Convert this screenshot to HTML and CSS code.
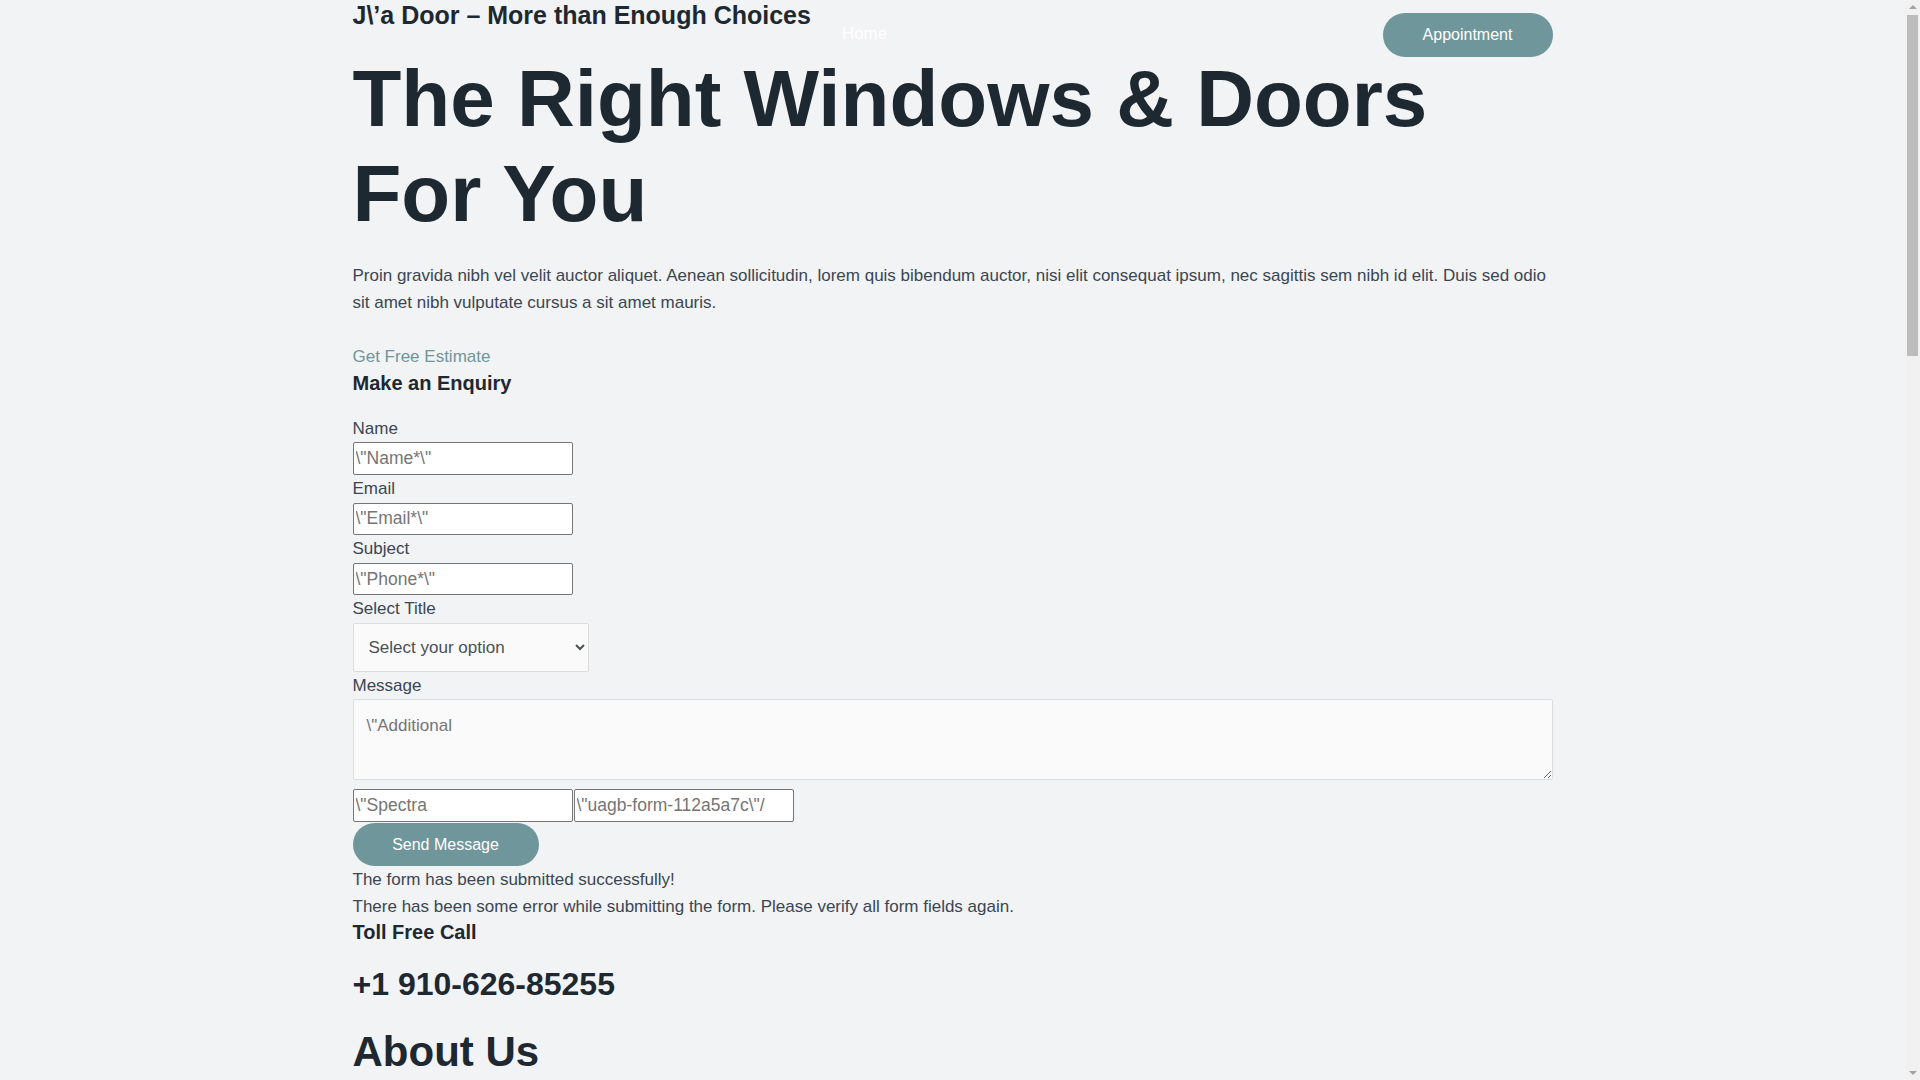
FILE: index.html
```html
<!DOCTYPE html>
<html lang="en">
<head>
<meta charset="utf-8">
<title>J\’a Door – More than Enough Choices</title>
<link rel="stylesheet" href="styles.css">
</head>
<body>
<div class="container">
  <header class="site-header">
    <h1 class="site-title">J\’a Door – More than Enough Choices</h1>
    <nav class="nav"><a href="#">Home</a></nav>
    <a class="btn btn-appointment" href="#">Appointment</a>
  </header>

  <section class="hero">
    <h2 class="hero-title">The Right Windows &amp; Doors For You</h2>
    <p class="hero-text">Proin gravida nibh vel velit auctor aliquet. Aenean sollicitudin, lorem quis bibendum auctor, nisi elit consequat ipsum, nec sagittis sem nibh id elit. Duis sed odio sit amet nibh vulputate cursus a sit amet mauris.</p>
    <a class="estimate" href="#">Get Free Estimate</a>
  </section>

  <section class="enquiry">
    <h3 class="enquiry-title">Make an Enquiry</h3>
    <form class="form">
      <label class="field-label">Name</label>
      <input class="text-input" type="text" placeholder="\&quot;Name*\&quot;">
      <label class="field-label">Email</label>
      <input class="text-input" type="text" placeholder="\&quot;Email*\&quot;">
      <label class="field-label">Subject</label>
      <input class="text-input" type="text" placeholder="\&quot;Phone*\&quot;">
      <label class="field-label">Select Title</label>
      <select class="select"><option>Select your option</option></select>
      <label class="field-label">Message</label>
      <textarea class="textarea" placeholder="\&quot;Additional"></textarea>
      <div class="hidden-row"><input class="text-input row-input" type="text" placeholder="\&quot;Spectra"><input class="text-input row-input" type="text" placeholder="\&quot;uagb-form-112a5a7c\&quot;/"></div>
      <button class="btn btn-send" type="button">Send Message</button>
      <p class="msg">The form has been submitted successfully!</p>
      <p class="msg">There has been some error while submitting the form. Please verify all form fields again.</p>
    </form>
  </section>

  <section class="contact">
    <h4 class="toll">Toll Free Call</h4>
    <h3 class="phone">+1 910-626-85255</h3>
  </section>

  <section class="about">
    <h2 class="about-title">About Us</h2>
  </section>
</div>

<div class="scrollbar" aria-hidden="true">
  <span class="scroll-arrow scroll-up"></span>
  <span class="scroll-thumb"></span>
  <span class="scroll-arrow scroll-down"></span>
</div>
</body>
</html>
```

FILE: styles.css
```css
html, body {
  margin: 0;
  padding: 0;
}

body {
  background: #f2f3f5;
  font-family: "Liberation Sans", Arial, sans-serif;
  font-size: 17px;
  color: #3a4652;
  padding-right: 15px;
  overflow: hidden;
}

.container {
  width: 1200px;
  margin: 0 auto;
}

.site-header {
  display: flex;
  align-items: flex-start;
  height: 51px;
}

.site-title {
  margin: 0;
  font-size: 25px;
  line-height: 30px;
  font-weight: 700;
  color: #1e2830;
  white-space: nowrap;
}

.nav {
  flex: 1;
  margin-left: 31px;
  margin-top: 24px;
  font-size: 17px;
  line-height: 20px;
}

.nav a {
  color: #ffffff;
  text-decoration: none;
}

.btn {
  display: flex;
  align-items: center;
  justify-content: center;
  box-sizing: border-box;
  background: #6f969a;
  color: #ffffff;
  border: 0;
  border-radius: 22px;
  font-family: "Liberation Sans", Arial, sans-serif;
  font-size: 16px;
  text-decoration: none;
  padding: 0;
}

.btn-appointment {
  width: 170px;
  height: 44px;
  margin-top: 13px;
}

.hero-title {
  margin: 0;
  font-size: 80px;
  line-height: 95px;
  font-weight: 700;
  color: #1e2830;
}

.hero-text {
  margin: 21px 0 0;
  line-height: 27px;
}

.estimate {
  display: block;
  margin-top: 27px;
  line-height: 27px;
  color: #6f969a;
  text-decoration: none;
}

.enquiry-title {
  margin: 0;
  font-size: 20px;
  line-height: 26px;
  font-weight: 700;
  color: #1e2830;
}

.form {
  margin: 18.5px 0 0;
}

.field-label {
  display: block;
  line-height: 27.75px;
}

.text-input {
  display: block;
  box-sizing: border-box;
  width: 220px;
  height: 32.5px;
  margin: 0;
  padding: 0 2px;
  border: 1px solid #767676;
  border-radius: 2px;
  background: #ffffff;
  font-family: "Liberation Sans", Arial, sans-serif;
  font-size: 17.5px;
  color: #3a4652;
}

.text-input::placeholder,
.textarea::placeholder {
  color: #757575;
  opacity: 1;
}

.select {
  display: block;
  box-sizing: border-box;
  width: 236px;
  height: 48.5px;
  margin: 0;
  padding: 0 14px 0 11px;
  border: 1px solid #dddddd;
  border-radius: 2px;
  background-color: #fafafa;
  font-family: "Liberation Sans", Arial, sans-serif;
  font-size: 17px;
  color: #4b5056;
}

.textarea {
  display: block;
  box-sizing: border-box;
  width: 100%;
  height: 81px;
  margin: 0;
  padding: 16px 13px;
  border: 1px solid #dddddd;
  border-radius: 2px;
  background: #fafafa;
  font-family: "Liberation Sans", Arial, sans-serif;
  font-size: 17px;
  line-height: 20px;
  color: #3a4652;
}

.hidden-row {
  display: flex;
  margin-top: 9px;
}

.row-input {
  height: 33px;
}

.row-input + .row-input {
  margin-left: 1px;
}

.btn-send {
  width: 186px;
  height: 43px;
  margin-top: 1px;
}

.msg {
  margin: 0;
  line-height: 27px;
}

.toll {
  margin: 0;
  font-size: 20px;
  line-height: 25px;
  font-weight: 700;
  color: #1e2830;
}

.phone {
  margin: 19.7px 0 0;
  font-size: 32px;
  line-height: 38.4px;
  font-weight: 700;
  color: #1e2830;
}

.about-title {
  margin: 24px 0 0;
  font-size: 42px;
  line-height: 50.4px;
  font-weight: 700;
  color: #1e2830;
}

/* browser scrollbar as seen in the screenshot */
.scrollbar {
  position: fixed;
  top: 0;
  right: 0;
  width: 15px;
  height: 100vh;
  background: #f1f1f1;
  display: flex;
  flex-direction: column;
  align-items: center;
}

.scroll-arrow {
  width: 0;
  height: 0;
  border-left: 4px solid transparent;
  border-right: 4px solid transparent;
}

.scroll-up {
  margin-top: 5px;
  border-bottom: 4px solid #a3a3a3;
}

.scroll-thumb {
  width: 11px;
  height: 341px;
  margin-top: 6px;
  background: #bcbcbc;
}

.scroll-down {
  margin-top: auto;
  margin-bottom: 5px;
  border-top: 4px solid #a3a3a3;
}
```
